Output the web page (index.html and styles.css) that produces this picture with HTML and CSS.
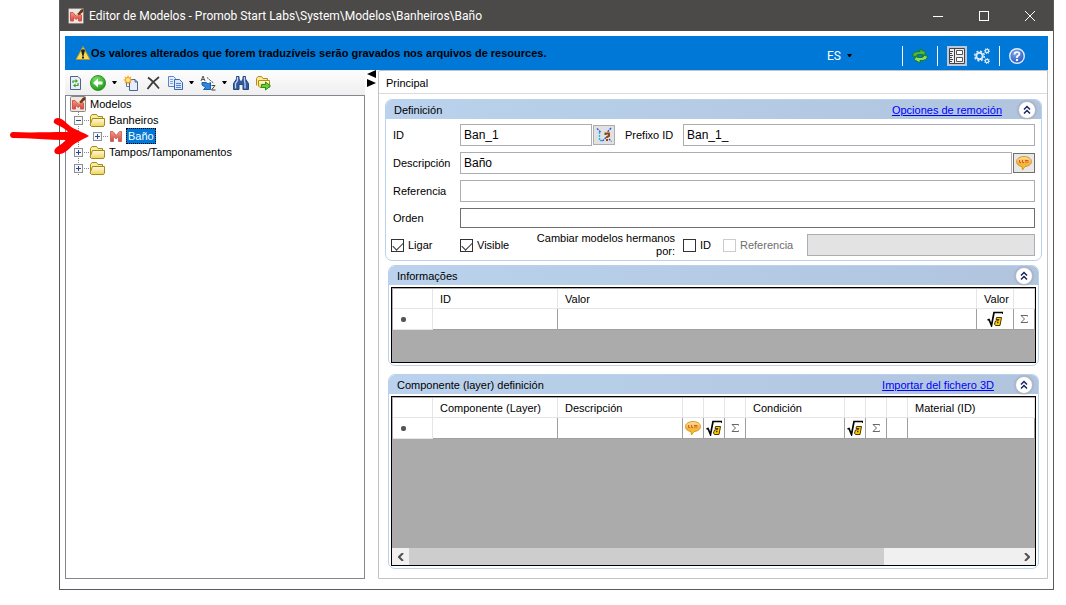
FILE: index.html
```html
<!DOCTYPE html>
<html lang="es">
<head>
<meta charset="utf-8">
<meta name="viewport" content="width=device-width, initial-scale=1.0">
<title>Editor de Modelos</title>
<link rel="stylesheet" href="styles.css">
</head>
<body>
<!-- shared icons -->
<svg class="sprite" aria-hidden="true">
  <defs>
    <linearGradient id="gFolder" x1="0" y1="0" x2="0" y2="1"><stop offset="0" stop-color="#fffcdc"/><stop offset="1" stop-color="#efd25c"/></linearGradient>
    <radialGradient id="gGreen" cx=".4" cy=".3" r=".8"><stop offset="0" stop-color="#7fe06a"/><stop offset="1" stop-color="#12900f"/></radialGradient>
    <radialGradient id="gHelp" cx=".4" cy=".3" r=".8"><stop offset="0" stop-color="#7fa8f0"/><stop offset="1" stop-color="#1f4fc0"/></radialGradient>
    <linearGradient id="gTalk" x1="0" y1="0" x2="0" y2="1"><stop offset="0" stop-color="#fbe3a0"/><stop offset=".5" stop-color="#f5b04a"/><stop offset="1" stop-color="#f7d100"/></linearGradient>
    <linearGradient id="gM" x1="0" y1="0" x2="0" y2="1"><stop offset="0" stop-color="#f09a8c"/><stop offset="1" stop-color="#d8463b"/></linearGradient>
  </defs>
  <symbol id="i-m" viewBox="0 0 16 16"><path d="M2.5 13.5V3.5H5L8.2 7.5L11.5 3.5H13.5V13.5H10.5V8.5L8.2 11L5.5 8.5V13.5Z" fill="url(#gM)" stroke="#cf6a60"/></symbol>
  <symbol id="i-app" viewBox="0 0 16 16"><rect x=".5" y=".5" width="15" height="15" rx="1" fill="#efe6e4" stroke="#8b8583"/><path d="M2.500 13V4.500H5L8 8L10 5.500L13.500 7V13H10.500V9.500L8 11.500L5.500 9V13Z" fill="url(#gM)" stroke="#d4574d"/><path d="M9 6.500L13 1.500L15.500 1L15 4L10.500 7.500Z" fill="#6e3612"/><path d="M8 8L9 5.800L10.800 7.300Z" fill="#f2c777"/></symbol>
  <symbol id="i-folder" viewBox="0 0 16 16"><path d="M1.500 13V4.500L3 2.500H7.500L9 4.500H13.500V7" fill="#f9ec9e" stroke="#a8871a"/><path d="M3.500 6.500H15.500V13L14.500 14.500H2.500L1 13Z" fill="url(#gFolder)" stroke="#a8871a"/></symbol>
  <symbol id="i-page" viewBox="0 0 16 16"><path d="M2.5 1.5H10L12.5 4V14.5H2.5Z" fill="#e9f0fc" stroke="#4d6390"/><path d="M5 8V6H8M10 8V10.500H7" fill="none" stroke="#3d9e1d" stroke-width="1.200"/><path d="M7.500 4L10 6L7.500 8ZM7.500 8.500V12.500L5 10.500Z" fill="#3d9e1d"/></symbol>
  <symbol id="i-back" viewBox="0 0 16 16"><circle cx="8" cy="8" r="7.5" fill="url(#gGreen)" stroke="#2a9626"/><path d="M3 8L8 3.5V6.5H12.5V9.5H8V12.5Z" fill="#fff"/></symbol>
  <symbol id="i-new" viewBox="0 0 16 16"><path d="M3.500 6V11.500H7" fill="#fff" stroke="#6577a8"/><path d="M6.500 4.500H12L14.500 7V15.500H6.500Z" fill="#e6eefc" stroke="#4d6390"/><path d="M12 4.500V7H14.500" fill="none" stroke="#4d6390"/><path d="M5 0L6 2.600L8.500 1.500L7.500 4L10 5L7.500 6L8.500 8.500L6 7.500L5 10L4 7.500L1.500 8.500L2.500 6L0 5L2.500 4L1.500 1.500L4 2.600Z" fill="#f7a21b"/><circle cx="5" cy="5" r="2" fill="#ffe98a"/></symbol>
  <symbol id="i-del" viewBox="0 0 16 16"><path d="M3 2.500Q8 6 14 13.500M14 2Q7 7 2.500 14" fill="none" stroke="#3c3c3c" stroke-width="1.800"/></symbol>
  <symbol id="i-copy" viewBox="0 0 16 16"><path d="M1.500 1.500H6.500L8.500 3.500V11.500H1.500Z" fill="#e8f0fd" stroke="#5b83cf"/><path d="M3 4.500H6M3 6.500H6M3 8.500H6" stroke="#7ea2e0"/><path d="M7.500 4.500H12.500L15.500 7.500V14.500H7.500Z" fill="#dce8fb" stroke="#3b62b4"/><path d="M9 8.500H14M9 10.500H14M9 12.500H14" stroke="#5b83cf"/></symbol>
  <symbol id="i-sort" viewBox="0 0 16 16"><path d="M1 6L3 1L5 6M2 4.500H4.500" fill="none" stroke="#555"/><path d="M11.500 10.500H15L11.500 15H15.500" fill="none" stroke="#444"/><path d="M7 2.500L14 8.500" stroke="#444" stroke-dasharray="2 1"/><path d="M2 7.500H6.500L8 9L10.500 7.500V14.500H3.500L5.500 12.500L2 10Z" fill="#2d86dc" stroke="#175fae"/></symbol>
  <symbol id="i-find" viewBox="0 0 16 16"><path d="M3.500 1.500H6V4L7.500 6.500H8.500L10 4V1.500H12.500V4L15.500 8.500V14.500H10V9.500H6V14.500H.5V8.500L3.500 4Z" fill="#315a9e" stroke="#24467f"/><path d="M4.500 2V5.500L2.500 8.500V13.500M11.500 2V5.500L12 8.500V13.500" fill="none" stroke="#c0d3f1" stroke-width="1.300"/></symbol>
  <symbol id="i-export" viewBox="0 0 16 16"><path d="M1.500 10.500V3.500L3 1.500H6.500L8 3.500H12.500V5" fill="#f9e99b" stroke="#b58c14"/><path d="M3.500 5.500H14.500V12.500H5L3.500 11Z" fill="url(#gFolder)" stroke="#b58c14"/><path d="M6.500 9.500H10.500V7L15.500 11L10.500 15V12.500H6.500Z" fill="#69cc3d" stroke="#2d8b1b"/></symbol>
  <symbol id="i-warn" viewBox="0 0 16 16"><path d="M8 1.500L15 14.500H1Z" fill="#f8dc55" stroke="#aa9433" stroke-linejoin="round"/><path d="M6 5.500Q8 3 10 5.500L8.500 11H7.500Z" fill="#222"/><rect x="7" y="11.500" width="2" height="2" fill="#222"/></symbol>
  <symbol id="i-sync" viewBox="0 0 16 16"><path d="M.5 8Q1 3 8 3.500V1L14 4.500L10.500 8.500V6.500Q5 5.500 3.500 8.500Z" fill="#4fb83a" stroke="#1d7a2a"/><path d="M15.500 8Q15 13 8 12.500V15L2 11.500L5.500 7.500V9.500Q11 10.500 12.500 7.500Z" fill="#8be05a" stroke="#1d7a2a"/></symbol>
  <symbol id="i-list" viewBox="0 0 16 16"><path d="M.5 .5H15.500V15.500H.5ZM5.500 .5V15.500" fill="#eee" stroke="#444"/><path d="M1 3.500H4M1 5.500H3M1 7.500H4M1 9.500H3M1 11.500H4M1 13.500H3" stroke="#444"/><path d="M7.500 2.500H13.500V6.500H7.500ZM7.500 9.500H13.500V13.500H7.500Z" fill="#fff" stroke="#555"/></symbol>
  <symbol id="i-gears" viewBox="0 0 16 16"><g fill="none" stroke="#dfe9f5"><circle cx="5.500" cy="8" r="3.200" stroke-width="2"/><circle cx="5.500" cy="8" r="4.800" stroke-width="1.500" stroke-dasharray="2 1.770"/><circle cx="13" cy="3" r="1.700" stroke-width="1.300"/><circle cx="13" cy="3" r="2.600" stroke-dasharray="1 1"/><circle cx="13" cy="13" r="1.700" stroke-width="1.300"/><circle cx="13" cy="13" r="2.600" stroke-dasharray="1 1"/></g></symbol>
  <symbol id="i-help" viewBox="0 0 16 16"><circle cx="8" cy="8" r="7.300" fill="url(#gHelp)" stroke="#e6ecf7" stroke-width="1.400"/><path d="M5.500 6.500Q5.500 4 8 4Q10.500 4 10.500 6Q10.500 7.300 8 8.500V10" fill="none" stroke="#fff" stroke-width="1.700"/><rect x="7" y="11" width="2" height="2" fill="#fff"/></symbol>
  <symbol id="i-talk" viewBox="0 0 16 16"><path d="M8 1.500C12 1.500 15.500 3.500 15.500 6.500C15.500 9.500 12 11.500 9 11.500L6.500 15L6 11.500C3 11.200 .5 9.500 .5 6.500C.5 3.500 4 1.500 8 1.500Z" fill="url(#gTalk)" stroke="#d59a1c"/><path d="M3.500 5V7.500H5M6.500 5V7.500H8M9 5.500H12.500M9 7H12.500" fill="none" stroke="#d5601a"/></symbol>
  <symbol id="i-root" viewBox="0 0 16 16"><path d="M.5 9L2 8.500L4.500 14.500L7 1.500H16V3" fill="none" stroke="#000" stroke-width="1.700"/><path d="M9.500 6.500H14.500L13 14.500H8.500L7.500 13L8.500 10L11.500 9.500L12 8.500H9Z" fill="#ffc800" stroke="#4b3800"/><path d="M10 11.500H11.500" stroke="#4b3800" stroke-width="1.300"/></symbol>
  <symbol id="i-sigma" viewBox="0 0 16 16"><path d="M11.500 5.500V4.500H5L8.500 8L5 11.500H11.500V10.500" fill="none" stroke="#666"/></symbol>
  <symbol id="i-rule" viewBox="0 0 16 16"><path d="M1 1.500L4.500 5M15 1L11 5.500M10 10.500L6 14.500M13 12L15.500 14.500" stroke="#2749d8" stroke-dasharray="2 1" stroke-width="1.300"/><path d="M3.500 5V13.500H6" fill="none" stroke="#18b5e8" stroke-dasharray="2 1" stroke-width="1.300"/><path d="M9.500 8V6.500H13V9L11 10V11" fill="none" stroke="#8a4a10" stroke-width="2"/><rect x="10" y="12" width="2" height="2" fill="#8a4a10"/></symbol>
  <symbol id="i-up" viewBox="0 0 16 16"><path d="M5 7.500L8 4.500L11 7.500M5 11.500L8 8.500L11 11.500" fill="none" stroke="#17255c" stroke-width="1.500"/></symbol>
  <symbol id="i-plus" viewBox="0 0 15 9"><rect x=".5" y=".5" width="8" height="8" fill="#f7f7f7" stroke="#8f8f8f"/><path d="M2 4.500H7M4.500 2V7" stroke="#2b4b99"/><path d="M10 4.500H15" stroke="#888" stroke-dasharray="1 1"/></symbol>
  <symbol id="i-minus" viewBox="0 0 15 9"><rect x=".5" y=".5" width="8" height="8" fill="#f7f7f7" stroke="#8f8f8f"/><path d="M2 4.500H7" stroke="#2b4b99"/><path d="M10 4.500H15" stroke="#888" stroke-dasharray="1 1"/></symbol>
</svg>

<div class="window">
  <header class="titlebar">
    <svg class="icon"><use href="#i-app"/></svg>
    <h1>Editor de Modelos - Promob Start Labs\System\Modelos\Banheiros\Baño</h1>
    <div class="window-buttons">
      <button type="button" aria-label="Minimizar"><svg width="10" height="10"><path d="M0 5.500H10"/></svg></button>
      <button type="button" aria-label="Maximizar"><svg width="10" height="10"><rect x=".5" y=".5" width="9" height="9"/></svg></button>
      <button type="button" aria-label="Cerrar"><svg width="10" height="10"><path d="M0 0L10 10M10 0L0 10"/></svg></button>
    </div>
  </header>

  <div class="content">
    <div class="banner">
      <svg class="icon"><use href="#i-warn"/></svg>
      <p>Os valores alterados que forem traduzíveis serão gravados nos arquivos de resources.</p>
      <div class="banner-tools">
        <button type="button" class="lang">ES <i class="caret"></i></button>
        <span class="sep"></span>
        <button type="button" aria-label="Sincronizar"><svg class="icon"><use href="#i-sync"/></svg></button>
        <span class="sep"></span>
        <button type="button" class="pressed" aria-label="Lista"><svg class="icon"><use href="#i-list"/></svg></button>
        <button type="button" aria-label="Opciones"><svg class="icon"><use href="#i-gears"/></svg></button>
        <span class="sep"></span>
        <button type="button" aria-label="Ayuda"><svg class="icon"><use href="#i-help"/></svg></button>
      </div>
    </div>

    <div class="columns">
      <aside class="sidebar">
        <div class="toolbar">
          <button type="button" aria-label="Actualizar"><svg class="icon"><use href="#i-page"/></svg></button>
          <button type="button" aria-label="Volver"><svg class="icon"><use href="#i-back"/></svg></button>
          <i class="caret"></i>
          <button type="button" aria-label="Nuevo"><svg class="icon"><use href="#i-new"/></svg></button>
          <button type="button" aria-label="Eliminar"><svg class="icon"><use href="#i-del"/></svg></button>
          <button type="button" aria-label="Copiar"><svg class="icon"><use href="#i-copy"/></svg></button>
          <i class="caret"></i>
          <button type="button" aria-label="Ordenar"><svg class="icon"><use href="#i-sort"/></svg></button>
          <i class="caret"></i>
          <button type="button" aria-label="Buscar"><svg class="icon"><use href="#i-find"/></svg></button>
          <button type="button" aria-label="Exportar"><svg class="icon"><use href="#i-export"/></svg></button>
        </div>
        <div class="tree">
          <div class="node"><svg class="icon"><use href="#i-app"/></svg><span>Modelos</span></div>
          <ul class="branch">
            <li>
              <div class="node"><svg class="toggle"><use href="#i-minus"/></svg><svg class="icon"><use href="#i-folder"/></svg><span>Banheiros</span></div>
              <ul>
                <li><div class="node"><svg class="toggle"><use href="#i-plus"/></svg><svg class="icon"><use href="#i-m"/></svg><span class="selected">Baño</span></div></li>
              </ul>
            </li>
            <li><div class="node"><svg class="toggle"><use href="#i-plus"/></svg><svg class="icon"><use href="#i-folder"/></svg><span>Tampos/Tamponamentos</span></div></li>
            <li><div class="node"><svg class="toggle"><use href="#i-plus"/></svg><svg class="icon"><use href="#i-folder"/></svg></div></li>
          </ul>
        </div>
      </aside>

      <div class="splitter">
        <svg width="9" height="18"><path d="M9 0V8L0 4ZM0 9V17L9 13Z"/></svg>
      </div>

      <main class="panel">
        <h2>Principal</h2>

        <section class="group wide">
          <div class="group-head">
            <h3>Definición</h3>
            <a href="#">Opciones de remoción</a>
            <button type="button" class="collapse" aria-label="Contraer"><svg class="icon"><use href="#i-up"/></svg></button>
          </div>
          <form class="form">
            <div class="row">
              <label class="name" for="id">ID</label>
              <input type="text" id="id" class="short" value="Ban_1">
              <button type="button" class="field-btn light" aria-label="Regla"><svg class="icon"><use href="#i-rule"/></svg></button>
              <label for="prefijo" class="second">Prefixo ID</label>
              <input type="text" id="prefijo" value="Ban_1_">
            </div>
            <div class="row">
              <label class="name" for="desc">Descripción</label>
              <input type="text" id="desc" value="Baño">
              <button type="button" class="field-btn" aria-label="Traducir"><svg class="icon"><use href="#i-talk"/></svg></button>
            </div>
            <div class="row">
              <label class="name" for="ref">Referencia</label>
              <input type="text" id="ref">
            </div>
            <div class="row low">
              <label class="name" for="orden">Orden</label>
              <input type="text" id="orden">
            </div>
            <div class="row">
              <label class="check c1"><input type="checkbox" checked>Ligar</label>
              <label class="check c2"><input type="checkbox" checked>Visible</label>
              <span class="hint">Cambiar modelos hermanos por:</span>
              <label class="check c3"><input type="checkbox">ID</label>
              <label class="check c4"><input type="checkbox" disabled>Referencia</label>
              <input type="text" aria-label="Referencia hermanos" disabled>
            </div>
          </form>
        </section>

        <section class="group">
          <div class="group-head">
            <h3>Informações</h3>
            <button type="button" class="collapse" aria-label="Contraer"><svg class="icon"><use href="#i-up"/></svg></button>
          </div>
          <div class="grid info">
            <table>
              <colgroup><col class="w-head"><col class="w-text"><col><col class="w-value"><col class="w-icon"></colgroup>
              <thead><tr><th></th><th>ID</th><th>Valor</th><th>Valor</th><th></th></tr></thead>
              <tbody><tr>
                <th class="new-row"><i></i></th><td></td><td></td>
                <td><svg class="icon"><use href="#i-root"/></svg></td>
                <td><svg class="icon"><use href="#i-sigma"/></svg></td>
              </tr></tbody>
            </table>
          </div>
        </section>

        <section class="group fill">
          <div class="group-head">
            <h3>Componente (layer) definición</h3>
            <a href="#">Importar del fichero 3D</a>
            <button type="button" class="collapse" aria-label="Contraer"><svg class="icon"><use href="#i-up"/></svg></button>
          </div>
          <div class="grid">
            <table>
              <colgroup><col class="w-head"><col class="w-text"><col class="w-text"><col class="w-icon"><col class="w-icon"><col class="w-icon"><col class="w-cond"><col class="w-icon"><col class="w-icon"><col class="w-icon"><col></colgroup>
              <thead><tr><th></th><th>Componente (Layer)</th><th>Descripción</th><th></th><th></th><th></th><th>Condición</th><th></th><th></th><th></th><th>Material (ID)</th></tr></thead>
              <tbody><tr>
                <th class="new-row"><i></i></th><td></td><td></td>
                <td><svg class="icon"><use href="#i-talk"/></svg></td>
                <td><svg class="icon"><use href="#i-root"/></svg></td>
                <td><svg class="icon"><use href="#i-sigma"/></svg></td>
                <td></td>
                <td><svg class="icon"><use href="#i-root"/></svg></td>
                <td><svg class="icon"><use href="#i-sigma"/></svg></td>
                <td></td><td></td>
              </tr></tbody>
            </table>
            <div class="scrollbar">
              <button type="button" aria-label="Izquierda"><svg width="6" height="8"><path d="M5 0L1 4L5 8"/></svg></button>
              <div class="track"><div class="thumb"></div></div>
              <button type="button" aria-label="Derecha"><svg width="6" height="8"><path d="M1 0L5 4L1 8"/></svg></button>
            </div>
          </div>
        </section>
      </main>
    </div>
  </div>
</div>

<!-- callout arrow over the tree -->
<svg class="pointer" width="82" height="42" viewBox="0 0 82 42" aria-hidden="true">
  <path d="M3 17C20 18 38 17 58 17C54 12 48 11 44 8C43 5 45 3 48 3C54 4 56 8 60 11C65 15 73 17 79 21C72 25 64 28 60 33C56 37 51 40 47 39C43 38 44 34 47 32C50 30 53 28 56 25C38 25 20 23 3 23C-1 23-1 17 3 17Z"/>
</svg>
</body>
</html>
```
FILE: styles.css
```css
* {
  box-sizing: border-box;
}
body {
  margin: 0;
  background: #fff;
  color: #000;
  font-family: "Liberation Sans", Arial, sans-serif;
  font-size: 11px;
  line-height: 16px;
}
h1, h2, h3, p, ul {
  margin: 0;
  padding: 0;
  font-size: 11px;
  font-weight: normal;
}
ul {
  list-style: none;
}
svg {
  display: block;
  flex-shrink: 0;
}
button {
  padding: 0;
  border: none;
  background: none;
  font: inherit;
  cursor: pointer;
}
a {
  color: #00f;
}
.sprite {
  position: absolute;
  width: 0;
  height: 0;
}
.icon {
  width: 16px;
  height: 16px;
}
.caret {
  flex-shrink: 0;
  width: 5px;
  border: solid transparent;
  border-width: 3px 2px 0;
  border-top-color: #000;
}

/* window */
.window {
  display: flex;
  flex-direction: column;
  min-height: calc(100vh - 15px);
  margin: 0 12px 15px 59px;
  border: 1px solid #5a5a5c;
  border-top: none;
}
.titlebar {
  display: flex;
  align-items: center;
  height: 31px;
  padding-left: 8px;
  background: #4c4a48;
  color: #fff;
}
.titlebar h1 {
  flex: 1;
  margin-left: 5px;
  font-family: Roboto, "Segoe UI", sans-serif;
  font-size: 12px;
}
.window-buttons {
  display: flex;
}
.window-buttons button {
  display: flex;
  align-items: center;
  justify-content: center;
  width: 46px;
  height: 31px;
}
.window-buttons svg {
  fill: none;
  stroke: #fff;
}
.content {
  flex: 1;
  display: flex;
  flex-direction: column;
  padding: 5px 5px 10px;
}

/* banner */
.banner {
  display: flex;
  align-items: center;
  height: 34px;
  padding: 0 23px 0 10px;
  background: #0078d7;
}
.banner p {
  flex: 1;
  font-weight: bold;
}
.banner-tools {
  display: flex;
  align-items: center;
  gap: 7px;
  padding-top: 5px;
}
.lang {
  display: flex;
  align-items: center;
  gap: 6px;
  margin-right: 41px;
  color: #fff;
  font-family: Roboto, "Segoe UI", sans-serif;
  font-size: 12px;
}
.sep {
  width: 1px;
  height: 20px;
  margin: 0 2px;
  background: #fff;
}
.pressed {
  padding: 2px;
  background: #bcc8da;
}

/* left side */
.columns {
  flex: 1;
  display: flex;
}
.sidebar {
  display: flex;
  flex-direction: column;
  width: 300px;
}
.toolbar {
  display: flex;
  align-items: center;
  gap: 6px;
  height: 25px;
  padding-left: 3px;
  background: linear-gradient(#fdfdfd, #efefef);
}
.tree {
  flex: 1;
  padding-left: 4px;
  border: 1px solid #828790;
}
.node {
  display: flex;
  align-items: center;
  height: 16px;
}
.node span {
  margin-left: 2px;
  padding: 0 2px;
}
.node .selected {
  background: #0078d7;
  color: #fff;
  outline: 1px dotted #000;
  outline-offset: -1px;
}
.toggle {
  width: 15px;
  height: 9px;
}
.branch {
  padding-left: 4px;
  background: repeating-linear-gradient(#888 0 1px, transparent 1px 2px) 8px 0 / 1px 100% no-repeat;
}
.branch ul {
  padding-left: 19px;
}
.splitter {
  width: 13px;
  padding-left: 2px;
}

/* right side */
.panel {
  flex: 1;
  display: flex;
  flex-direction: column;
  min-width: 0;
  padding-bottom: 9px;
  border: 1px solid #c3c3c3;
  border-radius: 2px 0 0 0;
}
.panel h2 {
  padding: 4px 7px 2px;
  border-bottom: 1px solid #dcdcdc;
}
.group {
  display: flex;
  flex-direction: column;
  margin: 0 8px 8px 9px;
  border: 1px solid #b9d1ea;
  border-radius: 7px;
}
.group.wide {
  margin: 5px 5px 4px 6px;
}
.group.fill {
  flex: 1;
  margin-bottom: 0;
}
.group-head {
  display: flex;
  align-items: center;
  height: 19px;
  padding: 0 5px 0 8px;
  border-radius: 6px 6px 0 0;
  background: linear-gradient(90deg, #bad2ed, #b0c4de);
}
.group-head h3 {
  flex: 1;
}
.collapse {
  width: 18px;
  height: 18px;
  margin-left: 16px;
  border: 1px solid #b4b8c4;
  border-radius: 9px;
  background: #fff;
  box-shadow: 0 0 2px #8a93a8;
}
.fill .collapse {
  margin-left: 21px;
}

/* form */
.form {
  display: flex;
  flex-direction: column;
  gap: 6px;
  padding: 5px 6px 4px 5px;
}
.row {
  display: flex;
  align-items: center;
  height: 22px;
}
.row.low {
  height: 20px;
}
.name {
  width: 69px;
  padding-left: 2px;
}
.row input[type="text"] {
  flex: 1;
  min-width: 0;
  height: 100%;
  padding: 0 3px;
  border: 1px solid #abadb3;
  background: #fff;
  font-family: inherit;
  font-size: 12px;
}
.row input.short {
  flex: 0 0 132px;
}
.row.low input {
  border-color: #6e6e70;
}
.row input[type="text"]:disabled {
  background: #e3e3e3;
}
.field-btn {
  display: flex;
  align-items: center;
  justify-content: center;
  width: 22px;
  height: 20px;
  margin-left: 1px;
  border: 1px solid #707070;
  background: #e8e8e8;
}
.field-btn.light {
  border-color: #adadad;
  background: #e1e1e1;
}
.second {
  width: 68px;
  padding-left: 10px;
}
.check {
  display: flex;
  align-items: center;
  gap: 4px;
}
.check input {
  display: flex;
  justify-content: center;
  appearance: none;
  width: 13px;
  height: 13px;
  margin: 0;
  border: 1px solid #333;
  background: #fff;
}
.check input:checked::before {
  content: "";
  width: 9px;
  height: 5px;
  margin-top: 2px;
  border: solid #333;
  border-width: 0 0 1px 1px;
  transform: rotate(-45deg);
}
.check input:disabled {
  border-color: #ccc;
}
.check:has(:disabled) {
  color: #6d6d6d;
}
.c1 {
  width: 69px;
}
.c2 {
  width: 73px;
}
.c3 {
  width: 40px;
}
.c4 {
  width: 84px;
}
.hint {
  width: 142px;
  margin-right: 8px;
  line-height: 13px;
  text-align: right;
}

/* data grids */
.grid {
  flex: 1;
  display: flex;
  flex-direction: column;
  justify-content: space-between;
  margin: 2px;
  padding: 1px 0 0 1px;
  border: 1px solid #000;
  background: #ababab;
}
.grid.info {
  min-height: 76px;
}
table {
  width: 100%;
  table-layout: fixed;
  border-collapse: separate;
  border-spacing: 0;
  background: #fff;
}
th, td {
  height: 21px;
  padding: 0;
  border: solid #a0a0a0;
  border-width: 0 1px 1px 0;
}
thead th {
  height: 20px;
  padding-left: 7px;
  border-color: #e5e5e5;
  font-weight: normal;
  text-align: left;
  white-space: nowrap;
}
td .icon {
  margin: 0 auto;
}
.new-row {
  border-color: #e5e5e5;
}
.new-row i {
  display: block;
  width: 5px;
  height: 5px;
  margin-left: 8px;
  border-radius: 2px;
  background: #555;
}
.w-head {
  width: 40px;
}
.w-text {
  width: 125px;
}
.w-value {
  width: 37px;
}
.w-icon {
  width: 21px;
}
.w-cond {
  width: 99px;
}
.scrollbar {
  display: flex;
  height: 17px;
  margin-left: -1px;
  background: #f0f0f0;
}
.scrollbar button {
  display: flex;
  align-items: center;
  justify-content: center;
  width: 17px;
}
.scrollbar svg {
  fill: none;
  stroke: #505050;
  stroke-width: 2;
}
.track {
  flex: 1;
}
.thumb {
  width: 78%;
  height: 100%;
  background: #cdcdcd;
}

.pointer {
  position: absolute;
  left: 10px;
  top: 115px;
  fill: #f00;
}
```
